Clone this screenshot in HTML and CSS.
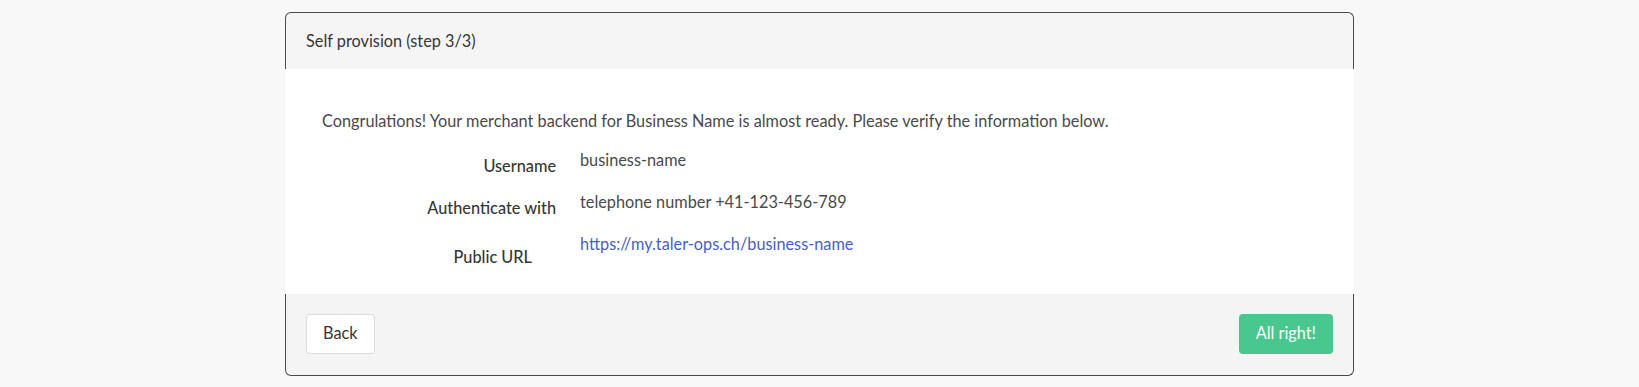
FILE: index.html
```html
<!DOCTYPE html>
<html lang="en">
<head>
    <meta charset="UTF-8">
    <meta name="viewport" content="width=device-width, initial-scale=1.0">
    <title>Self provision</title>
    <link rel="stylesheet" href="styles.css">
</head>
<body>
    <div class="card">
        <header class="card-head">
            <p class="card-title">Self provision (step 3/3)</p>
        </header>

        <section class="card-body">
            <p class="intro">Congrulations! Your merchant backend for Business Name is almost ready. Please verify the information below.</p>

            <div class="fields">
                <label class="field-label">Username</label>
                <div class="field-value">business-name</div>

                <label class="field-label">Authenticate with</label>
                <div class="field-value">telephone number +41-123-456-789</div>

                <label class="field-label field-label-url">Public URL</label>
                <div class="field-value"><a href="#">https://my.taler-ops.ch/business-name</a></div>
            </div>
        </section>

        <footer class="card-foot">
            <button class="button">Back</button>
            <button class="button button-success">All right!</button>
        </footer>
    </div>
</body>
</html>
```

FILE: styles.css
```css
html {
    background-color: #f8f8f8;
}
body {
    font-family: Lato, "Open Sans", sans-serif;
    font-size: 16.3px;
    line-height: 24px;
    color: #4a4a4a;
    margin: 0;
    padding-top: 12px;
}
.card {
    width: 1069px;
    margin: 0 auto;
}
.card-head {
    background-color: #f5f5f5;
    border: 1px solid #4a4a4a;
    border-bottom: none;
    border-radius: 6px 6px 0 0;
    padding: 20px;
}
.card-title {
    margin: 0;
    font-size: 16.3px;
    line-height: 16px;
    color: #363636;
}
.card-body {
    background-color: #fff;
    padding: 40px 37px 38px;
}
.intro {
    margin: 0 0 15px;
}
.fields {
    display: grid;
    grid-template-columns: 234px 1fr;
    column-gap: 24px;
    row-gap: 18px;
}
.field-label {
    text-align: right;
    font-weight: 500;
    color: #363636;
    padding-top: 6px;
    margin-bottom: -6px;
}
.field-label-url {
    padding-top: 13px;
    margin-bottom: -13px;
    padding-right: 24px;
}
.field-value a {
    color: #485fc7;
    text-decoration: none;
}
.card-foot {
    display: flex;
    justify-content: space-between;
    background-color: #f4f4f4;
    border: 1px solid #4a4a4a;
    border-top: none;
    border-radius: 0 0 6px 6px;
    padding: 20px 20px 21px;
}
.button {
    font-family: inherit;
    font-size: 16.3px;
    line-height: 22px;
    height: 40px;
    padding: 0 16px 2px;
    background-color: #fff;
    color: #363636;
    border: 1px solid #dbdbdb;
    border-radius: 4px;
    cursor: pointer;
}
.button-success {
    background-color: #48c78e;
    border-color: transparent;
    color: #fff;
}
.button-success:hover {
    background-color: #3ec487;
}
```
